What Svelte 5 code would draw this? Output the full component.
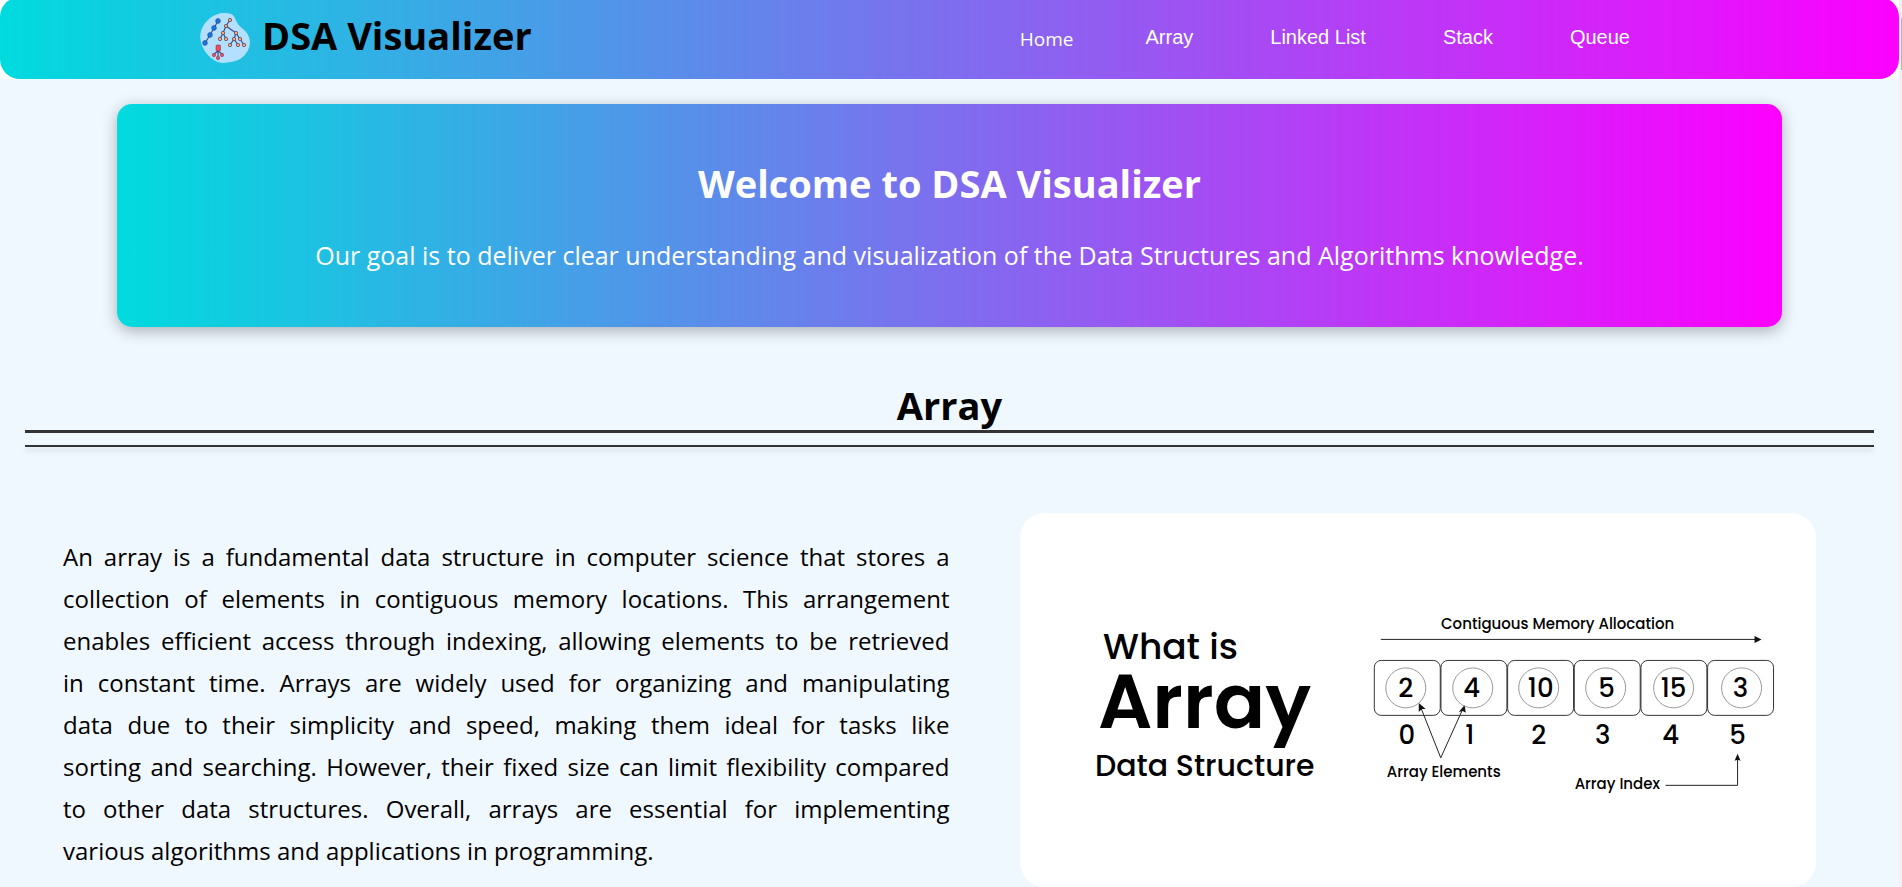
<script>
  const cells = [
    { value: '2', cx: 1406, tx: 1406, ix: 1407 },
    { value: '4', cx: 1473, tx: 1472, ix: 1470 },
    { value: '10', cx: 1539, tx: 1541, ix: 1539 },
    { value: '5', cx: 1606, tx: 1607, ix: 1603 },
    { value: '15', cx: 1674, tx: 1674, ix: 1671 },
    { value: '3', cx: 1742, tx: 1741, ix: 1738 }
  ];
  const links = ['Array', 'Linked List', 'Stack', 'Queue'];
</script>

<div class="page">
  <div class="bar">
    <header>
      <a class="brand" href="#home">
        <svg width="50" height="50" viewBox="0 0 50 50" aria-hidden="true">
          <path d="M24 0C30 0 33 1 35 5C37 10 38 12 43 16C48 20 50 25 50 30C49 41 40 48 31 49C25 50 20 51 14 47C4 41 -2 28 1 18C4 8 14 0 24 0Z" fill="#b3e0ff" />
          <g stroke="#3c4b8c" fill="none" stroke-width="1.2">
            <path d="M18 8L14 15L10 22L5 30M30 7L26 13L23 20L20 26M23 20L26 26M26 13L36 20L34 26L30 32M36 20L40 26L44 32M34 26L38 32" />
            <path d="M18 36V44M18 38L14 41M18 38L22 41" />
          </g>
          <g fill="#1976e0" stroke="#2a4a90" stroke-width=".6">
            <circle cx="18" cy="8" r="2.4" /><circle cx="14" cy="15" r="2.4" /><circle cx="10" cy="22" r="2.4" /><circle cx="5" cy="30" r="2.4" />
          </g>
          <g fill="#ffa66b" stroke="#4a3a60" stroke-width=".7">
            <circle cx="30" cy="7" r="1.7" /><circle cx="26" cy="13" r="1.7" /><circle cx="23" cy="20" r="1.7" />
            <circle cx="20" cy="26" r="1.7" /><circle cx="26" cy="26" r="1.7" /><circle cx="36" cy="20" r="1.7" />
            <circle cx="34" cy="26" r="1.7" /><circle cx="40" cy="26" r="1.7" /><circle cx="30" cy="32" r="1.7" />
            <circle cx="38" cy="32" r="1.7" /><circle cx="44" cy="32" r="1.7" />
          </g>
          <g fill="#f24d57" stroke="#7a3a5c" stroke-width=".6">
            <rect x="16" y="32" width="4.500" height="6" rx="1" />
            <circle cx="14" cy="42" r="1.700" /><circle cx="18" cy="45" r="1.700" /><circle cx="22" cy="42" r="1.700" />
          </g>
        </svg>
        <span>DSA Visualizer</span>
      </a>
      <nav>
        <a href="#home">Home</a>
        {#each links as link}
          <button type="button">{link}</button>
        {/each}
      </nav>
    </header>
  </div>

  <section class="hero">
    <h1>Welcome to DSA Visualizer</h1>
    <p>Our goal is to deliver clear understanding and visualization of the Data Structures and Algorithms knowledge.</p>
  </section>

  <h2>Array</h2>
  <div class="rule"></div>

  <main>
    <p class="copy">
      An array is a fundamental data structure in computer science that stores a collection of elements in contiguous memory locations. This arrangement enables efficient access through indexing, allowing elements to be retrieved in&nbsp;constant time. Arrays are widely used for organizing and manipulating data&nbsp;due to their simplicity and speed, making them ideal for tasks like sorting&nbsp;and&nbsp;searching. However, their fixed size can limit flexibility compared to&nbsp;other&nbsp;data structures. Overall, arrays are essential for implementing various&nbsp;algorithms and applications in programming.
    </p>
    <figure>
      <svg viewBox="1020 513 796 374" role="img" aria-label="Array data structure">
        <g>
          <text x="1103" y="659" font-size="36" font-weight="500">What is</text>
          <text x="1098" y="728" font-size="76" font-weight="600">Array</text>
          <text x="1095" y="776" font-size="30" font-weight="500">Data Structure</text>
        </g>
        <g font-weight="500" font-size="15">
          <text x="1558" y="629" text-anchor="middle">Contiguous Memory Allocation</text>
          <text x="1387" y="777">Array Elements</text>
          <text x="1575" y="789">Array Index</text>
        </g>
        <g fill="none" stroke="#222">
          <path d="M1381 639.500H1756" />
          <path d="M1420 705L1441 758L1464 707M1666 785.500H1738V758" />
        </g>
        <g fill="#111">
          <path d="M1755 636L1762 639.500L1755 643Z" />
          <path d="M1419 703L1426 709L1422 709L1419 712ZM1465 705L1466 713L1463 711L1459 712ZM1738 754L1741 761L1738 760L1735 761Z" />
        </g>
        {#each cells as cell, i}
          <rect x={1374.5 + i * 66.7} y="660.500" width="66" height="55" rx="7" fill="none" stroke="#333" />
          <circle cx={cell.cx} cy="688" r="20" fill="none" stroke="#999" />
          <g font-size="26" font-weight="500" text-anchor="middle">
            <text x={cell.tx} y="697">{cell.value}</text>
            <text x={cell.ix} y="744">{i}</text>
          </g>
        {/each}
      </svg>
    </figure>
  </main>
</div>

<style>
  :global(body) { background: #f1f1f1; }
  :global(html) { overflow: hidden; }
  .page {
    display: flow-root;
    margin-right: 3px;
    min-height: 100vh;
    background: #f0f8ff;
    color: #000;
    font-family: "Segoe UI", "Open Sans", "Noto Sans", sans-serif;
  }
  .page::after {
    content: "";
    position: fixed;
    top: 18px;
    right: 0;
    width: 1px;
    height: 52px;
    background: #b4b4b4;
  }
  .bar { margin-top: -3px; background: #fff; }
  header {
    display: flex;
    align-items: center;
    justify-content: space-between;
    box-sizing: border-box;
    height: 82px;
    padding: 0 269px 1px 200px;
    border-radius: 20px;
    background: linear-gradient(90deg, #00dbde, #fc00ff);
  }
  .brand { display: flex; align-items: center; gap: 12px; color: #000; font-size: 38px; font-weight: 700; text-decoration: none; }
  .brand span { padding-bottom: 6px; }
  nav { display: flex; align-items: center; gap: 77px; font-family: "Liberation Sans", Arial, sans-serif; font-size: 20px; }
  nav a { margin-right: -5px; padding-top: 2px; color: #fff; font-family: "Segoe UI", "Open Sans", sans-serif; font-size: 19px; text-decoration: none; }
  nav button { padding: 0; border: 0; background: none; color: #fff; font: inherit; }
  .hero {
    box-sizing: border-box;
    margin: 25px 117px 0;
    padding: 47px 20px 52px;
    border-radius: 15px;
    background: linear-gradient(90deg, #00dbde, #fc00ff);
    box-shadow: 0 4px 15px rgba(0, 0, 0, .3);
    color: #fff;
    text-align: center;
  }
  h1 { margin: 0; font-size: 38px; line-height: 64px; }
  .hero p { margin: 20px 0 0; font-size: 25px; line-height: 40px; }
  h2 { margin: 53px 25px 0; border-bottom: 3px solid #333; font-size: 38px; line-height: 50px; text-align: center; }
  .rule { height: 2px; margin: 12px 25px 0; background: #333; box-shadow: 0 4px 5px rgba(0, 0, 0, .15); }
  main { display: grid; grid-template-columns: 887fr 796fr; gap: 71px; margin: 66px 83px 0 63px; }
  .copy { margin: 23px 0 0; font-size: 24px; line-height: 42px; text-align: justify; }
  figure { margin: 0; border-radius: 25px; background: #fff; }
  figure svg { display: block; width: 100%; font-family: Poppins, "Open Sans", sans-serif; }
</style>
